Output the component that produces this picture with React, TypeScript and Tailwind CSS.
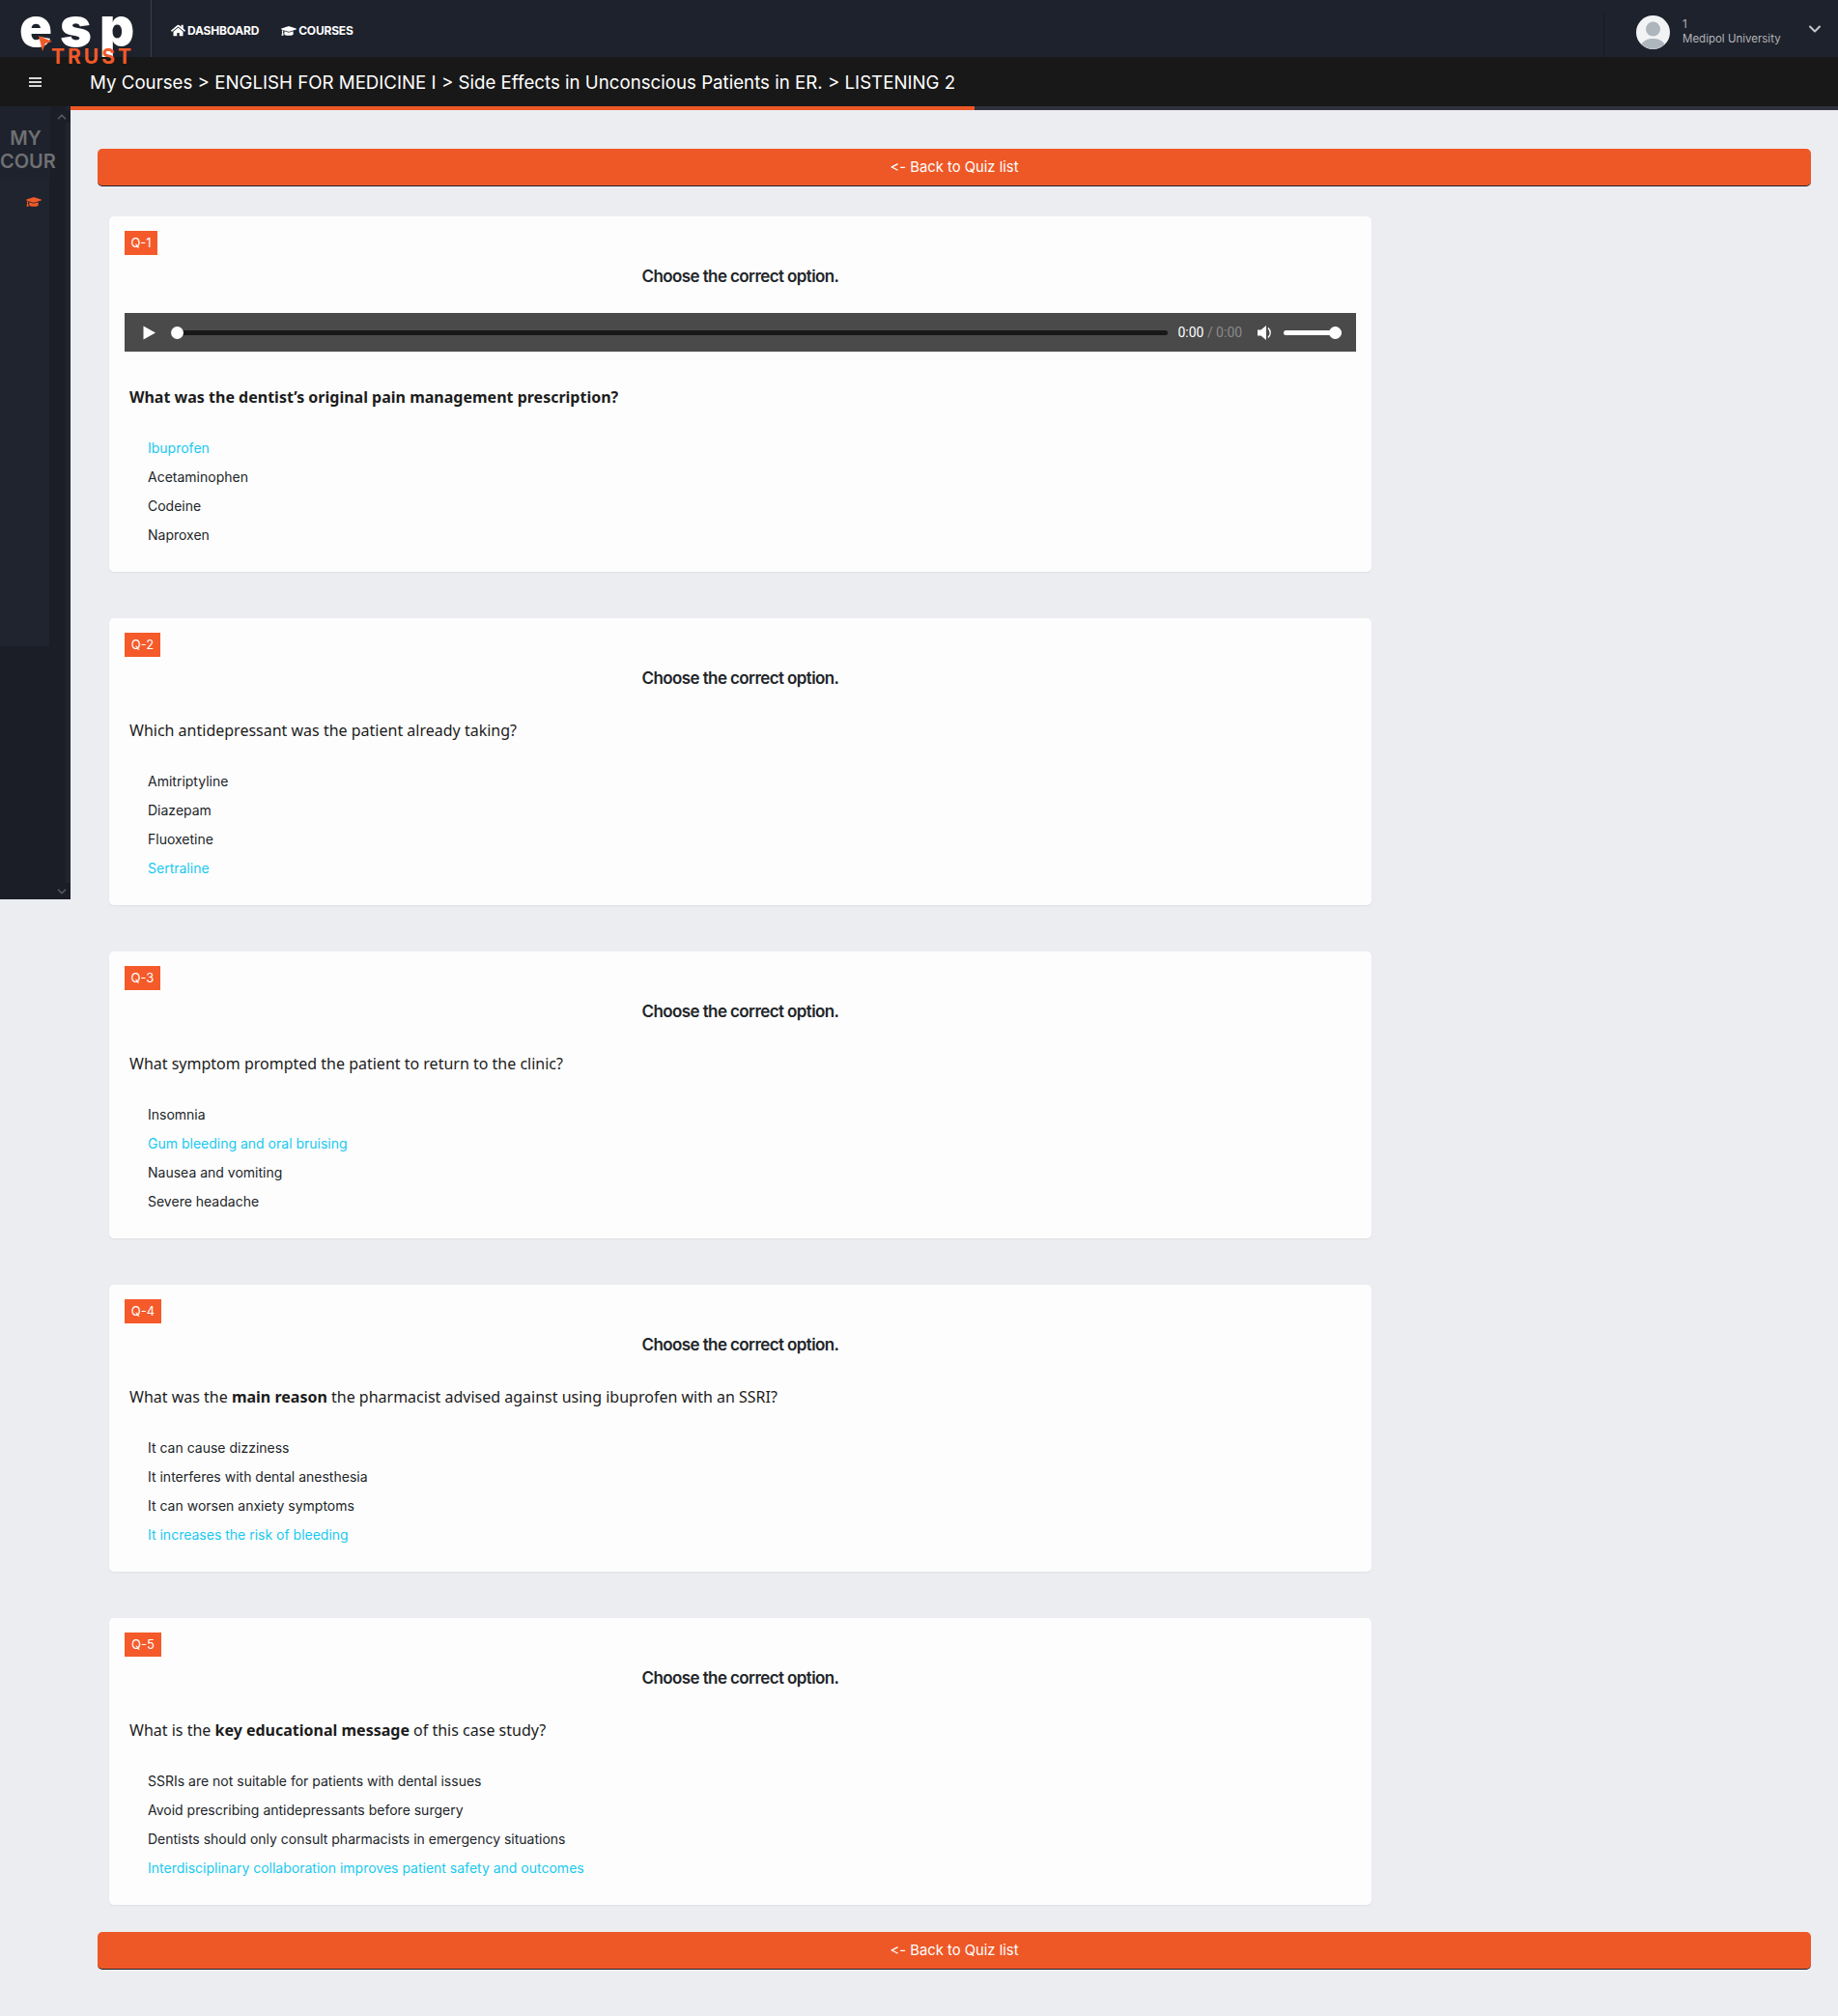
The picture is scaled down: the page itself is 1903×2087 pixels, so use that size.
import type { ReactNode } from "react";
import { FaGraduationCap, FaHome } from "react-icons/fa";
import { ChevronDown, ChevronUp } from "lucide-react";

type Question = {
  label: string;
  badgeWidth: string;
  text: ReactNode;
  audio?: boolean;
  options: string[];
  correct: number;
};

const questions: Question[] = [
  {
    label: "Q-1",
    badgeWidth: "w-[34px]",
    audio: true,
    text: <strong className="font-bold">What was the dentist’s original pain management prescription?</strong>,
    options: ["Ibuprofen", "Acetaminophen", "Codeine", "Naproxen"],
    correct: 0,
  },
  {
    label: "Q-2",
    badgeWidth: "w-[37px]",
    text: "Which antidepressant was the patient already taking?",
    options: ["Amitriptyline", "Diazepam", "Fluoxetine", "Sertraline"],
    correct: 3,
  },
  {
    label: "Q-3",
    badgeWidth: "w-[37px]",
    text: "What symptom prompted the patient to return to the clinic?",
    options: ["Insomnia", "Gum bleeding and oral bruising", "Nausea and vomiting", "Severe headache"],
    correct: 1,
  },
  {
    label: "Q-4",
    badgeWidth: "w-[38px]",
    text: (
      <>
        What was the <strong className="font-bold">main reason</strong> the pharmacist advised against using ibuprofen
        with an SSRI?
      </>
    ),
    options: [
      "It can cause dizziness",
      "It interferes with dental anesthesia",
      "It can worsen anxiety symptoms",
      "It increases the risk of bleeding",
    ],
    correct: 3,
  },
  {
    label: "Q-5",
    badgeWidth: "w-[38px]",
    text: (
      <>
        What is the <strong className="font-bold">key educational message</strong> of this case study?
      </>
    ),
    options: [
      "SSRIs are not suitable for patients with dental issues",
      "Avoid prescribing antidepressants before surgery",
      "Dentists should only consult pharmacists in emergency situations",
      "Interdisciplinary collaboration improves patient safety and outcomes",
    ],
    correct: 3,
  },
];

function Logo() {
  return (
    <div className="absolute left-0 top-0 z-10 h-[70px] w-[150px] font-['Inter',sans-serif]">
      <div className="absolute left-[20px] top-0 flex h-[56px] gap-[8px] text-[56px] leading-[56px] font-black text-white">
        <span>e</span>
        <span>s</span>
        <span>p</span>
      </div>
      <svg className="absolute left-[40px] top-[37px]" width="15" height="17" viewBox="0 0 15 17">
        <path d="M0 0 L14 6 L7 8 L4 16 Z" fill="#f15a29" />
      </svg>
      <div className="absolute left-[53px] top-[47px] text-[21px] leading-[24px] font-bold tracking-[3px] text-[#f15a29]">
        TRUST
      </div>
    </div>
  );
}

function Header() {
  return (
    <header className="flex h-[59px] items-center bg-[#1e222c] font-['Inter',sans-serif]">
      <div className="h-full w-[157px] border-r border-[#3a3e48]" />
      <nav className="ml-[20px] flex items-center gap-[23px] pt-[4px] text-[12px] font-bold text-white">
        <a className="flex items-center gap-[2px]">
          <FaHome size={15} />
          <span className="tracking-[-0.2px]">DASHBOARD</span>
        </a>
        <a className="flex items-center gap-[2px]">
          <FaGraduationCap size={16} />
          <span className="tracking-[-0.2px]">COURSES</span>
        </a>
      </nav>
      <div className="ml-auto flex h-[46px] items-center self-end border-l border-[#171a21] pl-[33px] pb-[10px]">
        <svg width="35" height="35" viewBox="0 0 35 35" className="mt-[5px]">
          <circle cx="17.5" cy="17.5" r="17.5" fill="#f2f3f4" />
          <circle cx="17.5" cy="14" r="7.5" fill="#adb5bd" />
          <path d="M5.5 30 C8 25 13 24 17.5 24 C22 24 27 25 29.5 30 A17.5 17.5 0 0 1 5.5 30 Z" fill="#adb5bd" />
        </svg>
        <div className="ml-[13px] w-[127px] pt-[3px] text-[11.5px] leading-[15px] text-[#b2b4b8]">
          <div>1</div>
          <div>Medipol University</div>
        </div>
        <ChevronDown size={20} strokeWidth={2.5} className="mr-[14px] mt-[-2px] text-[#c4c6ca]" />
      </div>
    </header>
  );
}

function Breadcrumb() {
  return (
    <div className="flex h-[51px] items-center bg-[#181818] font-['Inter',sans-serif] text-white">
      <div className="ml-[30px] flex w-[13px] flex-col gap-[2px]">
        <span className="h-[2px] bg-[#d8d8d8]" />
        <span className="h-[2px] bg-[#d8d8d8]" />
        <span className="h-[2px] bg-[#d8d8d8]" />
      </div>
      <div className="ml-[50px] pt-[2px] text-[18.7px] leading-[30px]">
        My Courses &gt; ENGLISH FOR MEDICINE I &gt; Side Effects in Unconscious Patients in ER. &gt; LISTENING 2
      </div>
    </div>
  );
}

function Sidebar() {
  return (
    <aside className="flex h-[821px] w-[73px] shrink-0 bg-[#1b1e26] font-['Inter',sans-serif]">
      <div className="flex w-[68px] flex-col">
        <div className="w-[52px] bg-[#1e222c] pt-[21px] pb-[7px]">
          <div className="w-[56px] text-center text-[20px] leading-[24px] font-semibold text-[#6f7073]">
            <div className="pr-[3px]">MY</div>
            <div>COUR</div>
          </div>
        </div>
        <div className="flex h-[483px] w-[51px] justify-end bg-[#20242e] pt-[15px] pr-[8px]">
          <FaGraduationCap size={16} className="text-[#f15a29]" />
        </div>
      </div>
      <div className="flex w-[5px] flex-col bg-[#22252e]" />
      <div className="absolute left-[55px] top-[114px] flex h-[13px] w-[18px] items-center justify-center bg-[#1b1e26]">
        <ChevronUp size={14} strokeWidth={3} className="text-[#55585f]" />
      </div>
      <div className="absolute left-[55px] top-[914px] flex h-[17px] w-[18px] items-center justify-center bg-[#1b1e26]">
        <ChevronDown size={14} strokeWidth={3} className="text-[#55585f]" />
      </div>
    </aside>
  );
}

function AudioBar() {
  return (
    <div className="mt-[26px] flex h-[40px] items-center bg-[#4a4a4a] pr-[15px] pl-[19px]">
      <svg width="13" height="15" viewBox="0 0 13 15">
        <path d="M0.5 0.5 L13 7.5 L0.5 14.5 Z" fill="#fff" />
      </svg>
      <div className="relative ml-[16px] h-[5px] w-[1034px] rounded-full bg-[#181818]">
        <span className="absolute left-0 top-[-4px] h-[13px] w-[13px] rounded-full bg-white" />
      </div>
      <div className="ml-[10px] font-['Roboto',sans-serif] text-[14px] whitespace-nowrap text-white">
        0:00 <span className="text-[#8a8a8a]">/ 0:00</span>
      </div>
      <svg className="ml-[16px]" width="17" height="17" viewBox="0 0 17 17">
        <path d="M0 5.5 H3.5 L9 1 V16 L3.5 11.5 H0 Z" fill="#fff" />
        <path d="M11 3.5 Q15.5 8.5 11 13.5" stroke="#fff" strokeWidth="1.4" fill="none" />
      </svg>
      <div className="relative ml-[10px] h-[5px] w-[60px] rounded-full bg-white">
        <span className="absolute right-0 top-[-4px] h-[13px] w-[13px] rounded-full bg-white" />
      </div>
    </div>
  );
}

function QuestionCard({ q }: { q: Question }) {
  return (
    <section className="ml-[12px] w-[1307px] rounded-[5px] bg-[#fdfdfd] px-[16px] pt-[15px] pb-[24px] shadow-[0_1px_2px_rgba(0,0,0,0.06)]">
      <div
        className={`flex h-[25px] items-center justify-center bg-[#f55a2a] font-['Inter',sans-serif] text-[13px] text-white ${q.badgeWidth}`}
      >
        {q.label}
      </div>
      <h3 className="mt-[10px] text-center font-['Inter',sans-serif] text-[17px] leading-[24px] font-semibold tracking-[-0.6px] text-[#212529]">
        Choose the correct option.
      </h3>
      {q.audio && <AudioBar />}
      <p
        className={`px-[5px] font-['Noto_Sans',sans-serif] text-[16px] leading-[24px] text-[#1c1c1c] ${
          q.audio ? "mt-[35px]" : "mt-[30px]"
        }`}
      >
        {q.text}
      </p>
      <ul className="mt-[25px] pl-[24px] font-['Inter',sans-serif] text-[14px]">
        {q.options.map((opt, i) => (
          <li
            key={opt}
            className={`flex h-[30px] items-center ${i === q.correct ? "text-[#19c9f0]" : "text-[#212529]"}`}
          >
            {opt}
          </li>
        ))}
      </ul>
    </section>
  );
}

function BackButton() {
  return (
    <button
      type="button"
      className="h-[39px] w-[1774px] rounded-[5px] border-b border-[#1e222c] bg-[#ee5827] font-['Inter',sans-serif] text-[14.8px] text-white [font-feature-settings:'calt'_0]"
    >
      &lt;- Back to Quiz list
    </button>
  );
}

export default function App() {
  return (
    <div className="relative min-h-[2087px] bg-[#ecedf1]">
      <Logo />
      <Header />
      <Breadcrumb />
      <div className="flex">
        <Sidebar />
        <main className="min-w-0 flex-1">
          <div className="flex h-[4px]">
            <div className="w-[936px] bg-[#ee5827]" />
            <div className="flex-1 bg-[#2f323e]" />
          </div>
          <div className="px-[28px] pt-[40px] pb-[48px]">
            <BackButton />
            <div className="mt-[31px] flex flex-col gap-[48px]">
              {questions.map((q) => (
                <QuestionCard key={q.label} q={q} />
              ))}
            </div>
            <div className="mt-[28px]">
              <BackButton />
            </div>
          </div>
        </main>
      </div>
    </div>
  );
}
